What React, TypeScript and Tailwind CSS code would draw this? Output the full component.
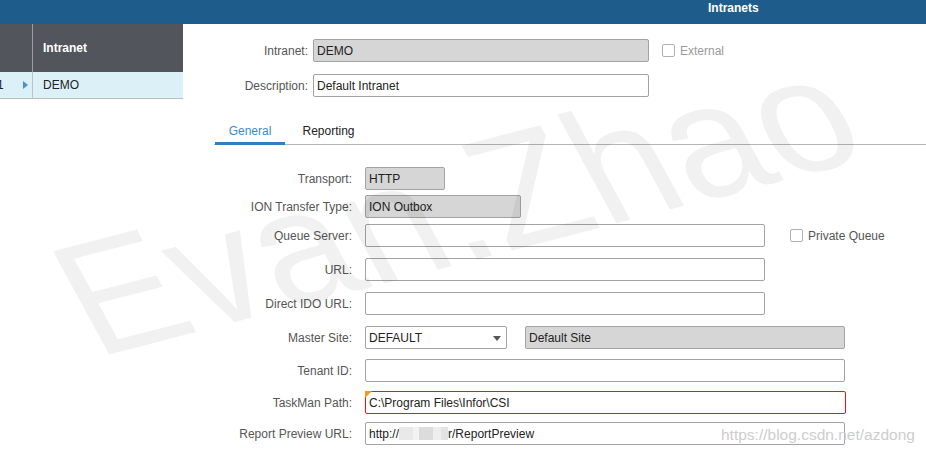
import React from "react";

function Box({
  w,
  gray,
  red,
  children,
}: {
  w: string;
  gray?: boolean;
  red?: boolean;
  children?: React.ReactNode;
}) {
  return (
    <div
      className={
        "relative h-[23px] rounded-[2px] border px-[3px] flex items-center text-[12px] text-[#222] whitespace-nowrap " +
        w +
        " " +
        (gray ? "bg-[#d6d6d6] " : "bg-white ") +
        (red ? "border-[#e8191b]" : "border-[#a3a3a3]")
      }
    >
      {children}
    </div>
  );
}

function Check() {
  return <div className="w-[13px] h-[13px] rounded-[2px] border border-[#b0b0b0] bg-white shrink-0" />;
}

function Row({
  label,
  mt,
  children,
}: {
  label: string;
  mt: string;
  children: React.ReactNode;
}) {
  return (
    <div className={"flex items-center " + mt}>
      <div className="w-[169px] shrink-0 text-right text-[12px] text-[#555]">{label}</div>
      <div className="ml-[13px] flex items-center">{children}</div>
    </div>
  );
}

export default function App() {
  return (
    <div className="relative w-[926px] h-[451px] overflow-hidden bg-white font-['Liberation_Sans',Arial,sans-serif]">
      <div className="h-[24px] bg-[#1e5d8b] pl-[708px] text-white font-bold text-[12px] leading-4">
        Intranets
      </div>
      <div className="flex">
        {/* left grid */}
        <div className="w-[183px] shrink-0">
          <div className="flex h-[48px] bg-[#52555c]">
            <div className="w-[33px] border-r border-[#9a9ea4]" />
            <div className="pl-[10px] flex items-center text-white font-bold text-[12px]">Intranet</div>
          </div>
          <div className="flex h-[27px] bg-[#dbf0f7] border-b border-[#bdbdbd] text-[12px] text-[#222]">
            <div className="relative w-[33px] border-r border-[#c4c4c4] flex items-center">
              <span className="-ml-[3px]">1</span>
              <span className="absolute left-[23px] top-[9px] w-0 h-0 border-y-[4px] border-y-transparent border-l-[5px] border-l-[#4a90d9]" />
            </div>
            <div className="pl-[10px] flex items-center">DEMO</div>
          </div>
        </div>

        {/* right form */}
        <div className="flex-1">
          <div className="pt-[15px]">
            <div className="flex items-center">
              <div className="w-[125px] text-right text-[12px] text-[#555]">Intranet:</div>
              <div className="ml-[5px]">
                <Box w="w-[336px]" gray>
                  DEMO
                </Box>
              </div>
              <div className="ml-[13px]">
                <Check />
              </div>
              <span className="ml-[5px] text-[12px] text-[#9a9a9a]">External</span>
            </div>
            <div className="flex items-center mt-[12px]">
              <div className="w-[125px] text-right text-[12px] text-[#555]">Description:</div>
              <div className="ml-[5px]">
                <Box w="w-[336px]">Default Intranet</Box>
              </div>
            </div>
          </div>

          <div className="ml-[31px] mt-[20px] flex h-[28px] border-b border-[#b5b5b5] text-[12px]">
            <div className="relative ml-[1px] w-[70px] flex items-center justify-center text-[#3a8bcb]">
              General
              <span className="absolute left-0 right-0 -bottom-px h-[3px] bg-[#2f7fc1]" />
            </div>
            <div className="w-[87px] flex items-center justify-center text-[#222]">Reporting</div>
          </div>

          <div className="mt-[22px]">
            <Row label="Transport:" mt="mt-0">
              <Box w="w-[80px]" gray>
                HTTP
              </Box>
            </Row>
            <Row label="ION Transfer Type:" mt="mt-[5px]">
              <Box w="w-[156px]" gray>
                ION Outbox
              </Box>
            </Row>
            <Row label="Queue Server:" mt="mt-[6px]">
              <Box w="w-[400px]" />
              <div className="ml-[25px]">
                <Check />
              </div>
              <span className="ml-[5px] text-[12px] text-[#555]">Private Queue</span>
            </Row>
            <Row label="URL:" mt="mt-[11px]">
              <Box w="w-[400px]" />
            </Row>
            <Row label="Direct IDO URL:" mt="mt-[11px]">
              <Box w="w-[400px]" />
            </Row>
            <Row label="Master Site:" mt="mt-[11px]">
              <Box w="w-[142px]">
                DEFAULT
                <span className="absolute right-[5px] top-[9px] w-0 h-0 border-x-[4px] border-x-transparent border-t-[5px] border-t-[#555]" />
              </Box>
              <div className="ml-[18px]">
                <Box w="w-[320px]" gray>
                  Default Site
                </Box>
              </div>
            </Row>
            <Row label="Tenant ID:" mt="mt-[10px]">
              <Box w="w-[480px]" />
            </Row>
            <Row label="TaskMan Path:" mt="mt-[9px]">
              <Box w="w-[481px]" red>
                <span className="absolute -left-px -top-px w-0 h-0 border-t-[7px] border-t-[#f39a1e] border-r-[7px] border-r-transparent" />
                C:\Program Files\Infor\CSI
              </Box>
            </Row>
            <Row label="Report Preview URL:" mt="mt-[8px]">
              <Box w="w-[480px]">
                http://
                <span className="inline-flex h-[13px]">
                  <span className="w-[14px] bg-[#e9e9e9]" />
                  <span className="w-[6px] bg-[#f3f3f3]" />
                  <span className="w-[14px] bg-[#dcdcdc]" />
                  <span className="w-[8px] bg-[#eeeeee]" />
                  <span className="w-[7px] bg-[#e3e3e3]" />
                </span>
                r/ReportPreview
              </Box>
            </Row>
          </div>
        </div>
      </div>

      {/* watermarks */}
      <div className="pointer-events-none absolute left-[96px] top-[218px] origin-[0_140px] [transform:rotate(-14.5deg)_skewX(14deg)] whitespace-nowrap text-[166px] leading-none text-black/[0.055]">
        Evan.Zhao
      </div>
      <div className="pointer-events-none absolute left-[721px] top-[425px] text-[15.5px] leading-5 text-[#cdcdcd] whitespace-nowrap">
        https://blog.csdn.net/azdong
      </div>
    </div>
  );
}
